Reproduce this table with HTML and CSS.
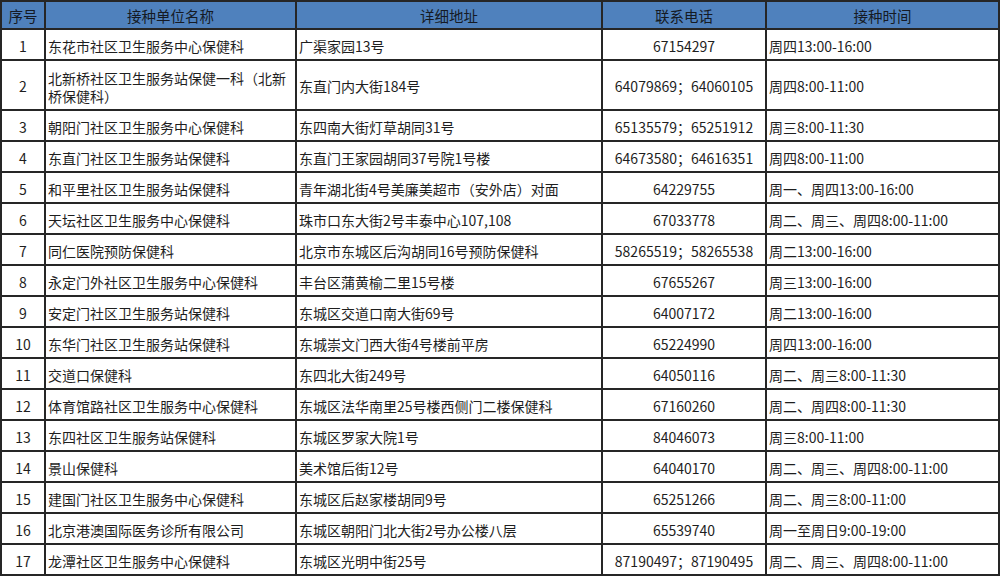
FILE: index.html
```html
<!DOCTYPE html>
<html lang="zh-CN">
<head>
<meta charset="utf-8">
<title>接种单位</title>
<link rel="stylesheet" href="styles.css">
</head>
<body>
<table class="grid">
  <colgroup>
    <col class="c-no"><col class="c-name"><col class="c-addr"><col class="c-tel"><col class="c-time">
  </colgroup>
  <thead>
    <tr class="head"><th>序号</th><th>接种单位名称</th><th>详细地址</th><th>联系电话</th><th>接种时间</th></tr>
  </thead>
  <tbody>
    <tr><td class="ctr">1</td><td>东花市社区卫生服务中心保健科</td><td>广渠家园13号</td><td class="ctr">67154297</td><td>周四13:00-16:00</td></tr>
    <tr class="tall"><td class="ctr">2</td><td class="wrap">北新桥社区卫生服务站保健一科（北新<br>桥保健科）</td><td>东直门内大街184号</td><td class="ctr">64079869；64060105</td><td>周四8:00-11:00</td></tr>
    <tr><td class="ctr">3</td><td>朝阳门社区卫生服务中心保健科</td><td>东四南大街灯草胡同31号</td><td class="ctr">65135579；65251912</td><td>周三8:00-11:30</td></tr>
    <tr><td class="ctr">4</td><td>东直门社区卫生服务站保健科</td><td>东直门王家园胡同37号院1号楼</td><td class="ctr">64673580；64616351</td><td>周四8:00-11:00</td></tr>
    <tr><td class="ctr">5</td><td>和平里社区卫生服务站保健科</td><td>青年湖北街4号美廉美超市（安外店）对面</td><td class="ctr">64229755</td><td>周一、周四13:00-16:00</td></tr>
    <tr><td class="ctr">6</td><td>天坛社区卫生服务中心保健科</td><td>珠市口东大街2号丰泰中心107,108</td><td class="ctr">67033778</td><td>周二、周三、周四8:00-11:00</td></tr>
    <tr><td class="ctr">7</td><td>同仁医院预防保健科</td><td>北京市东城区后沟胡同16号预防保健科</td><td class="ctr">58265519；58265538</td><td>周二13:00-16:00</td></tr>
    <tr><td class="ctr">8</td><td>永定门外社区卫生服务中心保健科</td><td>丰台区蒲黄榆二里15号楼</td><td class="ctr">67655267</td><td>周三13:00-16:00</td></tr>
    <tr><td class="ctr">9</td><td>安定门社区卫生服务站保健科</td><td>东城区交道口南大街69号</td><td class="ctr">64007172</td><td>周二13:00-16:00</td></tr>
    <tr><td class="ctr">10</td><td>东华门社区卫生服务站保健科</td><td>东城崇文门西大街4号楼前平房</td><td class="ctr">65224990</td><td>周四13:00-16:00</td></tr>
    <tr><td class="ctr">11</td><td>交道口保健科</td><td>东四北大街249号</td><td class="ctr">64050116</td><td>周二、周三8:00-11:30</td></tr>
    <tr><td class="ctr">12</td><td>体育馆路社区卫生服务中心保健科</td><td>东城区法华南里25号楼西侧门二楼保健科</td><td class="ctr">67160260</td><td>周二、周四8:00-11:30</td></tr>
    <tr><td class="ctr">13</td><td>东四社区卫生服务站保健科</td><td>东城区罗家大院1号</td><td class="ctr">84046073</td><td>周三8:00-11:00</td></tr>
    <tr><td class="ctr">14</td><td>景山保健科</td><td>美术馆后街12号</td><td class="ctr">64040170</td><td>周二、周三、周四8:00-11:00</td></tr>
    <tr><td class="ctr">15</td><td>建国门社区卫生服务中心保健科</td><td>东城区后赵家楼胡同9号</td><td class="ctr">65251266</td><td>周二、周三8:00-11:00</td></tr>
    <tr><td class="ctr">16</td><td>北京港澳国际医务诊所有限公司</td><td>东城区朝阳门北大街2号办公楼八层</td><td class="ctr">65539740</td><td>周一至周日9:00-19:00</td></tr>
    <tr><td class="ctr">17</td><td>龙潭社区卫生服务中心保健科</td><td>东城区光明中街25号</td><td class="ctr">87190497；87190495</td><td>周二、周三、周四8:00-11:00</td></tr>
  </tbody>
</table>
</body>
</html>
```
FILE: styles.css
```css
html, body {
  margin: 0;
  padding: 0;
  background: #ffffff;
}
body {
  font-family: "Noto Sans CJK SC", "DejaVu Sans", sans-serif;
  font-size: 14px;
  color: #1e1e1e;
}
.grid {
  border-collapse: collapse;
  table-layout: fixed;
  width: 998px;
}
.c-no { width: 44px; }
.c-name { width: 251px; }
.c-addr { width: 306px; }
.c-tel { width: 164px; }
.c-time { width: 233px; }
.grid th, .grid td {
  border: 2px solid #262626;
  padding: 2px 2px 0 2px;
  height: 27px;
  line-height: 18px;
  vertical-align: middle;
  white-space: nowrap;
  overflow: hidden;
  text-align: left;
}
.grid th {
  background: #4f81bd;
  font-weight: normal;
  text-align: center;
  color: #151a24;
  font-size: 14.5px;
  height: 25px;
  padding-top: 1px;
}
.grid .ctr { text-align: center; }
.grid .tall td { height: 45px; }
.grid .wrap { line-height: 18px; padding-top: 3px; }
```
